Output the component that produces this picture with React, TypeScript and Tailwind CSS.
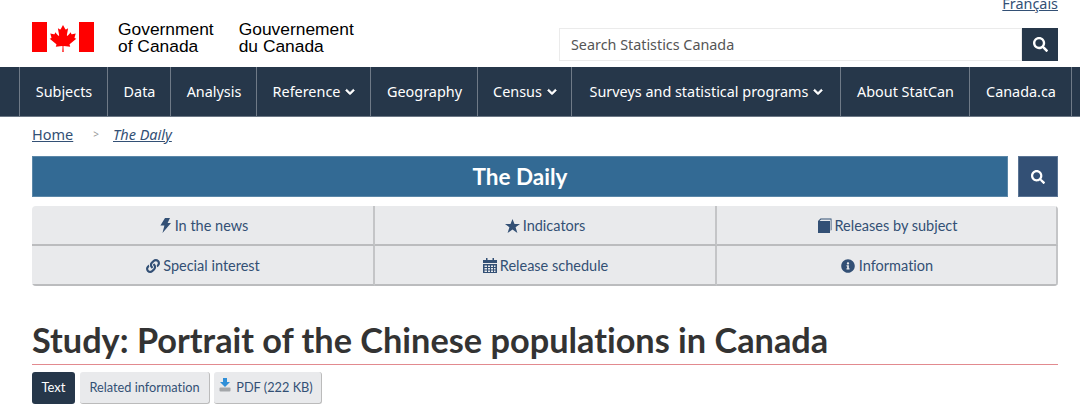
import { FaChevronDown, FaInfoCircle, FaLink, FaSearch } from 'react-icons/fa';
import type { ReactNode } from 'react';

const navItems = [
  { label: 'Subjects', width: 'w-[88px]' },
  { label: 'Data', width: 'w-[63px]' },
  { label: 'Analysis', width: 'w-[86px]' },
  { label: 'Reference', width: 'w-[114px]', caret: true },
  { label: 'Geography', width: 'w-[107px]' },
  { label: 'Census', width: 'w-[94px]', caret: true },
  { label: 'Surveys and statistical programs', width: 'w-[269px]', caret: true },
  { label: 'About StatCan', width: 'w-[129px]' },
  { label: 'Canada.ca', width: 'w-[102px]' },
];

const Flag = () => (
  <svg width="62" height="30" viewBox="0 0 62 30" aria-hidden="true">
    <rect x="0" y="0" width="15" height="30" fill="#ff0000" />
    <rect x="47" y="0" width="15" height="30" fill="#ff0000" />
    <path
      fill="#ff0000"
      d="M31 3l-2.2 4c-.3.5-.7.5-1.2.2l-1.7-.9 1.2 6.6c.2 1-.6 1.1-1 .6l-2.9-3.2-.5 1.6c-.1.3-.4.5-.8.4l-3.6-.8 1 3.4c.2.7.3 1-.3 1.3l-1.3.6 6.4 5.1c.3.2.4.5.3.9l-.6 1.9 6.3-.7c.3 0 .5.2.5.5l-.3 5.4h1.4l-.3-5.4c0-.3.2-.5.5-.5l6.3.7-.6-1.9c-.1-.4 0-.7.3-.9l6.4-5.1-1.3-.6c-.6-.3-.5-.6-.3-1.3l1-3.4-3.6.8c-.4.1-.7-.1-.8-.4l-.5-1.6-2.9 3.2c-.4.5-1.2.4-1-.6l1.2-6.6-1.7.9c-.5.3-.9.3-1.2-.2z"
    />
  </svg>
);

const BoltIcon = () => (
  <svg width="11" height="15" viewBox="0 0 11 15" fill="currentColor" aria-hidden="true">
    <path d="M5 0h5L7.6 5H11L2.5 15l1.9-7.5H0.4z" />
  </svg>
);

const StarIcon = () => (
  <svg width="15" height="14" viewBox="0 0 15 14" fill="currentColor" aria-hidden="true">
    <path d="M7.5 0l2 5h5.5l-4.4 3.3 1.8 5.7-4.9-3.4-4.9 3.4 1.8-5.7L0 5h5.5z" />
  </svg>
);

const BookIcon = () => (
  <svg width="14" height="15" viewBox="0 0 14 15" fill="currentColor" aria-hidden="true">
    <path d="M0 3L2.5.5h11v11.5l-.8.8V1.4H3L1.5 3H12v12H0z" />
  </svg>
);

const CalendarIcon = () => (
  <svg width="14" height="15" viewBox="0 0 14 15" fill="currentColor" aria-hidden="true">
    <path d="M3 0h1.5v2h5V0H11v2h3v3H0V2h3z" />
    <path fillRule="evenodd" d="M0 6h14v9H0zM1.5 7.5v1.5h2.5V7.5zm3.5 0v1.5h2V7.5zm3 0v1.5h2V7.5zm3 0v1.5h1.5V7.5zM1.5 10v1.5h2.5V10zm3.5 0v1.5h2V10zm3 0v1.5h2V10zm3 0v1.5h1.5V10zM1.5 12.5V14h2.5v-1.5zm3.5 0V14h2v-1.5zm3 0V14h2v-1.5zm3 0V14h1.5v-1.5z" />
  </svg>
);

const Tab = ({ icon, label, gap }: { icon: ReactNode; label: string; gap: string }) => (
  <div className={`flex h-[40px] items-center justify-center border-r-2 border-b-2 border-r-[#c4c5c7] border-b-[#bbbcbe] bg-[#e9eaec] pt-[1px] text-[14.5px] text-[#335075] [font-variant-ligatures:none] ${gap}`}>
    {icon}
    <span>{label}</span>
  </div>
);

export default function App() {
  return (
    <div className="h-[415px] w-[1080px] overflow-hidden bg-white font-['Noto_Sans',sans-serif]">
      {/* Header */}
      <header className="flex h-[67px] justify-between pr-[22px] pl-[32px]">
        <div className="flex items-start pt-[22px]">
          <Flag />
          <div className="-mt-[1px] ml-[24px] font-['Liberation_Sans',sans-serif] text-[17.4px] leading-[17px] text-black">
            Government
            <br />
            of Canada
          </div>
          <div className="-mt-[1px] ml-[25px] font-['Liberation_Sans',sans-serif] text-[17.4px] leading-[17px] text-black">
            Gouvernement
            <br />
            du Canada
          </div>
        </div>
        <div className="flex flex-col items-end">
          <a className="-mt-[6px] h-[34px] text-[14.4px] leading-[20px] text-[#335075] underline">Français</a>
          <div className="flex h-[33px] w-[499px]">
            <div className="flex flex-1 items-center border border-[#ebebeb] pl-[11px] text-[14.35px] text-[#555]">
              Search Statistics Canada
            </div>
            <div className="flex w-[36px] items-center justify-center bg-[#26374a] text-white">
              <FaSearch size={15} />
            </div>
          </div>
        </div>
      </header>

      {/* Main nav */}
      <nav className="flex h-[50px] border-b border-[#6b7785] bg-[#26374a] pl-[19px] text-[14.4px] text-white">
        {navItems.map((item) => (
          <div key={item.label} className={`flex items-center justify-center gap-[5px] border-l border-[#6f7a87] pl-[1px] ${item.width}`}>
            <span>{item.label}</span>
            {item.caret && <FaChevronDown size={10} stroke="currentColor" strokeWidth={40} />}
          </div>
        ))}
        <div className="border-l border-[#6f7a87]" />
      </nav>

      <main className="pr-[22px] pl-[32px]">
        {/* Breadcrumb */}
        <div className="flex h-[39px] items-center pb-[4px] text-[14.5px] text-[#335075]">
          <a className="underline">Home</a>
          <span className="mr-[14px] ml-[20px] text-[10px] text-[#999]">&gt;</span>
          <a className="italic underline">The Daily</a>
        </div>

        {/* The Daily banner */}
        <div className="flex gap-[10px]">
          <div className="flex h-[41px] flex-1 items-center justify-center border border-[#5b87a8] bg-[#336a94] font-['Lato',sans-serif] text-[22.5px] font-bold text-white [font-variant-ligatures:none]">
            The Daily
          </div>
          <div className="flex h-[41px] w-[40px] items-center justify-center border border-[#5a7494] bg-[#335075] text-white">
            <FaSearch size={14} />
          </div>
        </div>

        {/* Daily tabs */}
        <div className="mt-[9px] grid grid-cols-[343px_342px_341px] overflow-hidden rounded-[4px] font-['Lato',sans-serif]">
          <Tab icon={<BoltIcon />} label="In the news" gap="gap-[4px] pl-[3px]" />
          <Tab icon={<StarIcon />} label="Indicators" gap="gap-[3px]" />
          <Tab icon={<BookIcon />} label="Releases by subject" gap="gap-[3px] pl-[2px]" />
          <Tab icon={<FaLink size={14} />} label="Special interest" gap="gap-[3px] pl-[1px]" />
          <Tab icon={<CalendarIcon />} label="Release schedule" gap="gap-[3px] pl-[1px]" />
          <Tab icon={<FaInfoCircle size={14} />} label="Information" gap="gap-[4px] pl-[1px]" />
        </div>

        {/* Title */}
        <h1 className="mt-[28px] h-[51px] border-b border-[#e28a8f] font-['Lato',sans-serif] text-[34.3px] leading-[52px] font-bold text-[#333] [font-variant-ligatures:none]">
          Study: Portrait of the Chinese populations in Canada
        </h1>

        {/* Format buttons */}
        <div className="mt-[7px] flex gap-[4px] font-['Lato',sans-serif] text-[12.75px] [font-variant-ligatures:none]">
          <div className="flex h-[32px] w-[43px] items-center justify-center rounded-[3px] bg-[#26374a] text-[13px] text-white">Text</div>
          <div className="ml-[1px] flex h-[32px] w-[130px] items-center justify-center rounded-[3px] border-r border-b border-[#bbb] bg-[#e9eaec] pt-[1px] text-[#335075]">
            Related information
          </div>
          <div className="flex h-[32px] w-[108px] items-center justify-center gap-[5px] rounded-[3px] border-r border-b border-[#bbb] bg-[#e9eaec] pt-[1px] pr-[3px] text-[#335075]">
            <svg width="12" height="15" viewBox="0 0 12 15" className="-mt-[5px]" aria-hidden="true">
              <path fill="#2f8fd8" d="M4 0h4v4h3L6 9 1 4h3z" />
              <rect x="0.5" y="9.5" width="11" height="4" rx="1" fill="#a3a6a9" />
            </svg>
            <span>PDF (222 KB)</span>
          </div>
        </div>
      </main>
    </div>
  );
}
